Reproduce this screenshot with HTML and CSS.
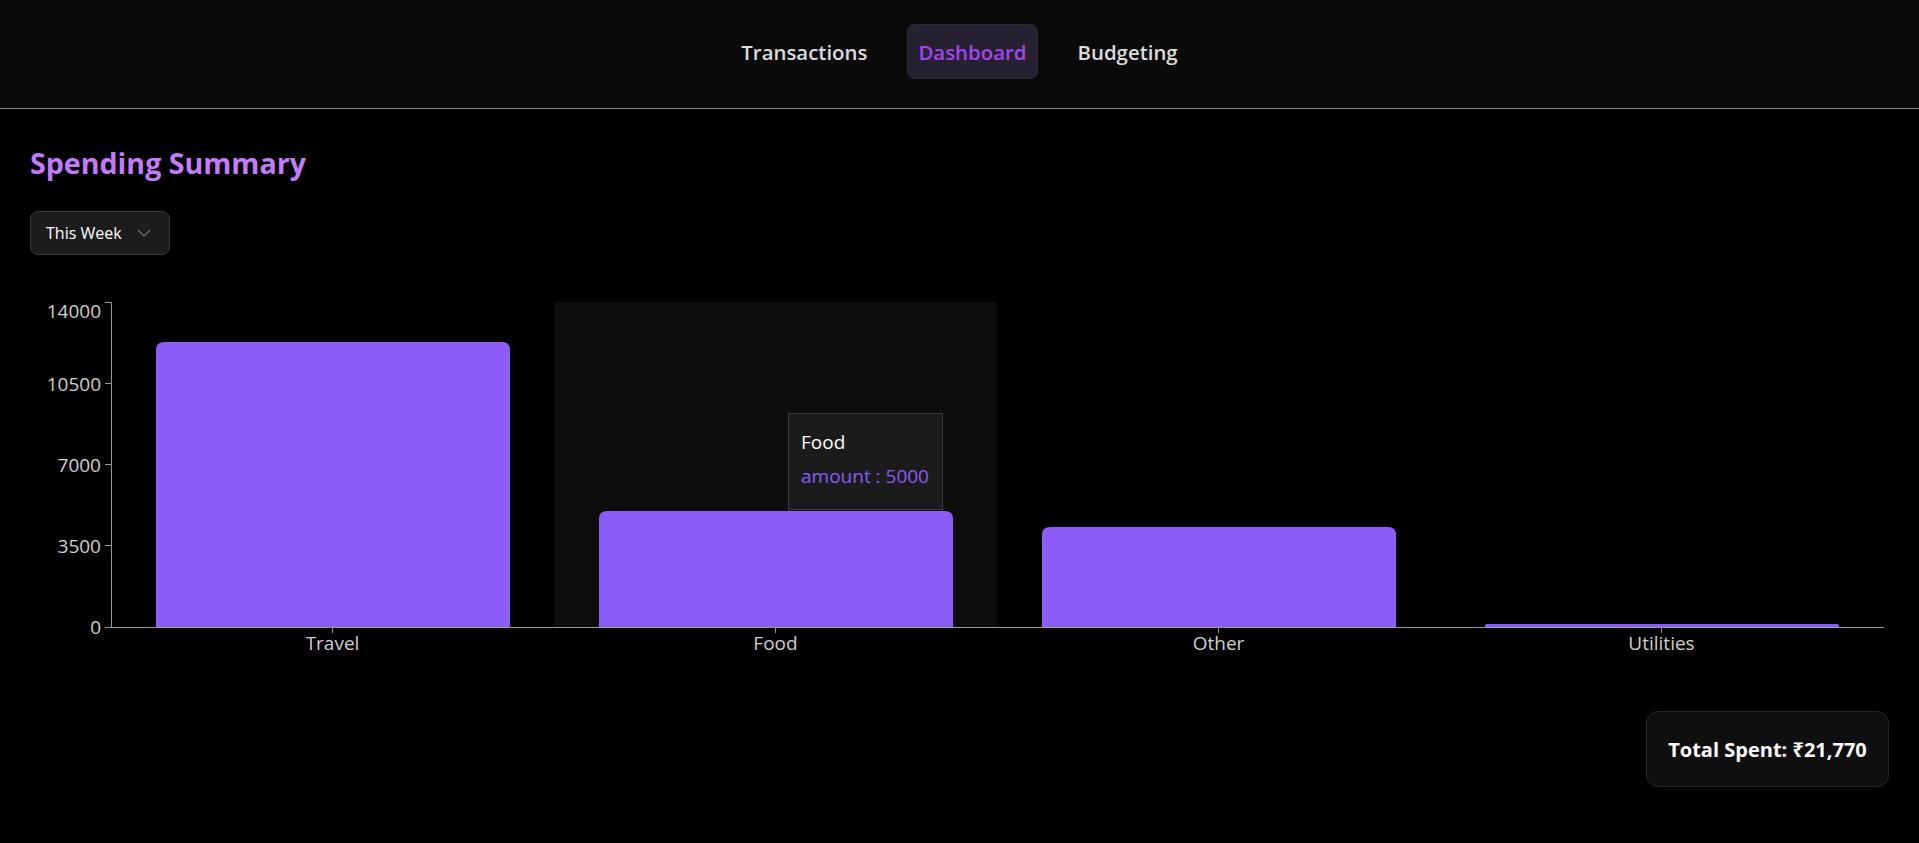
FILE: index.html
```html
<!DOCTYPE html>
<html lang="en">
<head>
<meta charset="utf-8">
<title>Spending Summary</title>
<link rel="stylesheet" href="styles.css">
</head>
<body>
<header class="topbar">
  <nav class="nav">
    <a class="nav-item">Transactions</a>
    <a class="nav-item active">Dashboard</a>
    <a class="nav-item">Budgeting</a>
  </nav>
</header>
<main class="main">
  <h1 class="title">Spending Summary</h1>
  <div class="select">
    <span>This Week</span>
    <svg class="chev" width="14" height="8" viewBox="0 0 14 8"><path d="M1 1 L7 7 L13 1" fill="none" stroke="#6b6b6b" stroke-width="1.4"/></svg>
  </div>
  <div class="chart">
    <svg class="chart-svg" width="1859" height="390" viewBox="0 0 1859 390">
      <rect x="524" y="21" width="443" height="325" fill="#0d0d0d"/>
      <path d="M126 346 V69 Q126 61 134 61 H472 Q480 61 480 69 V346 Z" fill="#8b5cf6"/>
      <path d="M569 346 V238 Q569 230 577 230 H915 Q923 230 923 238 V346 Z" fill="#8b5cf6"/>
      <path d="M1012 346 V254 Q1012 246 1020 246 H1358 Q1366 246 1366 254 V346 Z" fill="#8b5cf6"/>
      <path d="M1455 346 V344.5 Q1455 343 1457 343 H1807 Q1809 343 1809 344.5 V346 Z" fill="#8b5cf6"/>
      <g stroke="#9a9a9a" stroke-width="1" fill="none">
        <line x1="81.5" y1="21" x2="81.5" y2="346"/>
        <line x1="75" y1="21.5" x2="81" y2="21.5"/>
        <line x1="75" y1="102.5" x2="81" y2="102.5"/>
        <line x1="75" y1="183.5" x2="81" y2="183.5"/>
        <line x1="75" y1="264.5" x2="81" y2="264.5"/>
        <line x1="75" y1="346.5" x2="81" y2="346.5"/>
        <line x1="81" y1="346.5" x2="1854" y2="346.5"/>
        <line x1="302.5" y1="346" x2="302.5" y2="352"/>
        <line x1="745.5" y1="346" x2="745.5" y2="352"/>
        <line x1="1188.5" y1="346" x2="1188.5" y2="352"/>
        <line x1="1631.5" y1="346" x2="1631.5" y2="352"/>
      </g>
      <g class="axis-text" text-anchor="end">
        <text x="71" y="37">14000</text>
        <text x="71" y="110">10500</text>
        <text x="71" y="191">7000</text>
        <text x="71" y="272">3500</text>
        <text x="71" y="353">0</text>
      </g>
      <g class="axis-text" text-anchor="middle">
        <text x="302.5" y="369">Travel</text>
        <text x="745.5" y="369">Food</text>
        <text x="1188.5" y="369">Other</text>
        <text x="1631.5" y="369">Utilities</text>
      </g>
    </svg>
    <div class="tooltip">
      <div class="tt-label">Food</div>
      <div class="tt-item">amount : 5000</div>
    </div>
  </div>
  <div class="total-row">
    <div class="total">Total Spent: ₹21,770</div>
  </div>
</main>
</body>
</html>
```

FILE: styles.css
```css
* { box-sizing: border-box; }
html, body {
  margin: 0;
  padding: 0;
  background: #000;
  color: #fff;
  font-family: "Open Sans", "Noto Sans", sans-serif;
}
.topbar {
  background: #0a0a0a;
  border-bottom: 1px solid #8a8a8a;
  height: 109px;
  padding-top: 24px;
}
.nav {
  display: flex;
  justify-content: center;
  gap: 29px;
}
.nav-item {
  font-size: 20.4px;
  font-weight: 600;
  color: #dcdcdc;
  padding: 0 10px;
  height: 55px;
  display: flex;
  align-items: center;
  border-radius: 8px;
  border: 1px solid transparent;
}
.nav-item.active {
  background: #262130;
  border-color: #2f2a38;
  color: #a445f5;
}
.main {
  padding: 0 30px;
}
.title {
  margin: 0;
  padding-top: 30px;
  font-size: 28.6px;
  line-height: 48px;
  font-weight: 700;
  color: #c27cfa;
}
.select {
  margin-top: 24px;
  width: 140px;
  height: 44px;
  background: #1c1c1c;
  border: 1px solid #3b3b3b;
  border-radius: 8px;
  display: flex;
  align-items: center;
  padding: 0 0 0 15px;
  font-size: 16px;
  color: #fff;
  gap: 15px;
}
.chev { margin-top: 0; }
.chart {
  position: relative;
  margin-top: 26px;
  height: 390px;
}
.chart-svg { display: block; }
.axis-text text {
  font-family: "Open Sans", "Noto Sans", sans-serif;
  font-size: 19px;
  fill: #cfcfcf;
}
.tooltip {
  position: absolute;
  left: 758px;
  top: 132px;
  width: 155px;
  height: 97px;
  background: #1b1b1b;
  border: 1px solid #3c3c3c;
  padding: 10px 12px;
  font-size: 19px;
  white-space: nowrap;
}
.tt-label {
  color: #fff;
  line-height: 24px;
  margin-top: 6px;
}
.tt-item {
  color: #8b5cf6;
  line-height: 24px;
  margin-top: 10px;
}
.total-row {
  display: flex;
  justify-content: flex-end;
  margin-top: 40px;
}
.total {
  width: 243px;
  height: 76px;
  background: #0f0f0f;
  border: 1px solid #262626;
  border-radius: 12px;
  display: flex;
  align-items: center;
  justify-content: center;
  font-size: 20px;
  font-weight: 700;
}
```
